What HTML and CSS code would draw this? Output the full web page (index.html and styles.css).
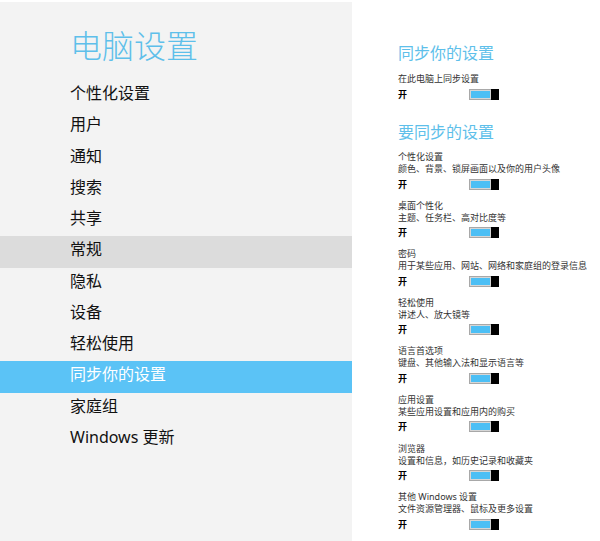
FILE: index.html
```html
<!DOCTYPE html>
<html lang="zh-CN">
<head>
    <meta charset="UTF-8">
    <title>电脑设置</title>
    <link rel="stylesheet" href="styles.css">
</head>
<body>
    <div class="page">
        <div class="nav">
            <h1 class="nav-title">电脑设置</h1>
            <ul class="nav-list">
                <li>个性化设置</li>
                <li>用户</li>
                <li>通知</li>
                <li>搜索</li>
                <li>共享</li>
                <li class="hover">常规</li>
                <li>隐私</li>
                <li>设备</li>
                <li>轻松使用</li>
                <li class="active">同步你的设置</li>
                <li>家庭组</li>
                <li>Windows 更新</li>
            </ul>
        </div>

        <div class="content">
            <h2 class="section-title">同步你的设置</h2>
            <div class="first-label">在此电脑上同步设置</div>
            <div class="switch-row">
                <span class="state">开</span>
                <span class="switch"><span class="switch-fill"></span><span class="switch-thumb"></span></span>
            </div>

            <h2 class="section-title second">要同步的设置</h2>

            <div class="group">
                <div class="group-name">个性化设置</div>
                <div class="group-desc">颜色、背景、锁屏画面以及你的用户头像</div>
                <div class="switch-row">
                    <span class="state">开</span>
                    <span class="switch"><span class="switch-fill"></span><span class="switch-thumb"></span></span>
                </div>
            </div>
            <div class="group">
                <div class="group-name">桌面个性化</div>
                <div class="group-desc">主题、任务栏、高对比度等</div>
                <div class="switch-row">
                    <span class="state">开</span>
                    <span class="switch"><span class="switch-fill"></span><span class="switch-thumb"></span></span>
                </div>
            </div>
            <div class="group">
                <div class="group-name">密码</div>
                <div class="group-desc">用于某些应用、网站、网络和家庭组的登录信息</div>
                <div class="switch-row">
                    <span class="state">开</span>
                    <span class="switch"><span class="switch-fill"></span><span class="switch-thumb"></span></span>
                </div>
            </div>
            <div class="group">
                <div class="group-name">轻松使用</div>
                <div class="group-desc">讲述人、放大镜等</div>
                <div class="switch-row">
                    <span class="state">开</span>
                    <span class="switch"><span class="switch-fill"></span><span class="switch-thumb"></span></span>
                </div>
            </div>
            <div class="group">
                <div class="group-name">语言首选项</div>
                <div class="group-desc">键盘、其他输入法和显示语言等</div>
                <div class="switch-row">
                    <span class="state">开</span>
                    <span class="switch"><span class="switch-fill"></span><span class="switch-thumb"></span></span>
                </div>
            </div>
            <div class="group">
                <div class="group-name">应用设置</div>
                <div class="group-desc">某些应用设置和应用内的购买</div>
                <div class="switch-row">
                    <span class="state">开</span>
                    <span class="switch"><span class="switch-fill"></span><span class="switch-thumb"></span></span>
                </div>
            </div>
            <div class="group">
                <div class="group-name">浏览器</div>
                <div class="group-desc">设置和信息，如历史记录和收藏夹</div>
                <div class="switch-row">
                    <span class="state">开</span>
                    <span class="switch"><span class="switch-fill"></span><span class="switch-thumb"></span></span>
                </div>
            </div>
            <div class="group">
                <div class="group-name">其他 Windows 设置</div>
                <div class="group-desc">文件资源管理器、鼠标及更多设置</div>
                <div class="switch-row">
                    <span class="state">开</span>
                    <span class="switch"><span class="switch-fill"></span><span class="switch-thumb"></span></span>
                </div>
            </div>
        </div>
    </div>
</body>
</html>
```

FILE: styles.css
```css
html, body {
    margin: 0;
    padding: 0;
    background-color: #ffffff;
}

body {
    font-family: 'Noto Sans', 'Noto Sans CJK SC', sans-serif;
    color: #111111;
    overflow: hidden;
}

.page {
    display: flex;
    height: 541px;
    padding-top: 2px;
    box-sizing: border-box;
}

/* left navigation */
.nav {
    width: 352px;
    background-color: #f3f3f3;
    flex-shrink: 0;
}

.nav-title {
    margin: 0;
    padding: 24px 0 0 70px;
    height: 54px;
    font-size: 32px;
    line-height: 40px;
    font-weight: 300;
    color: #5ebfea;
}

.nav-list {
    list-style: none;
    margin: 0;
    padding: 0;
}

.nav-list li {
    height: 31.25px;
    line-height: 26px;
    padding-left: 70px;
    font-size: 16px;
    color: #111111;
    box-sizing: border-box;
}

.nav-list li.hover {
    background-color: #dcdcdc;
}

.nav-list li.active {
    background-color: #5bc3f6;
    color: #ffffff;
}

/* right settings */
.content {
    padding: 40px 0 0 46px;
    font-size: 9px;
    color: #333333;
}

.section-title {
    margin: 0;
    font-size: 16px;
    line-height: 22px;
    font-weight: 400;
    color: #5ebfea;
}

.section-title.second {
    margin-top: 18px;
    margin-bottom: 8px;
}

.first-label {
    margin-top: 9px;
    line-height: 12px;
}

.group {
    padding-bottom: 6.6px;
}

.group-name,
.group-desc {
    line-height: 12px;
}

.switch-row {
    display: flex;
    align-items: center;
    height: 18px;
}

.state {
    width: 71px;
    font-weight: 700;
    color: #000000;
}

.switch {
    display: flex;
    width: 30px;
    height: 11px;
    box-sizing: border-box;
    border: 1px solid #a8a8a8;
    border-right: none;
}

.switch-fill {
    flex: 1;
    background-color: #4cbff5;
    border: 1px solid #d6d6d6;
}

.switch-thumb {
    width: 8px;
    margin-top: -1px;
    height: 11px;
    background-color: #000000;
}
```
